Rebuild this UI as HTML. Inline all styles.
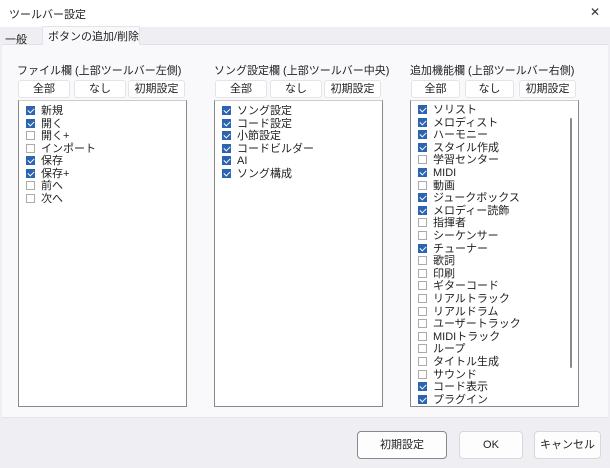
<!DOCTYPE html>
<html><head><meta charset="utf-8"><style>
*{margin:0;padding:0;box-sizing:border-box}
body{width:610px;height:468px;background:#efeef2;font-family:"Liberation Sans","Noto Sans CJK JP",sans-serif;font-size:11px;color:#222;position:relative;overflow:hidden}
.title{position:absolute;left:0;top:0;width:610px;height:27px;background:#fff;}
.ttl{position:absolute;left:9px;top:6px;font-size:11px}
.xx{position:absolute;left:590px;top:5px;font-size:12px;color:#333}
.panel{position:absolute;left:2px;top:44px;width:606px;height:374px;background:#f9f8fb;border-top:1px solid #e2e2e6;border-bottom:1px solid #e6e6ea}
.tab{position:absolute;top:28px;font-size:11px}
.lbl{position:absolute;top:62px;font-size:11px}
.btn{position:absolute;top:80px;height:18px;background:#fff;border:1px solid #e4e4e8;border-radius:3px;text-align:center;line-height:16px;font-size:11px}
.list{position:absolute;top:100px;height:307px;width:169px;background:#fff;border:1px solid #888;border-top-color:#ccc}
.it{position:absolute;left:7px;height:12px;line-height:12px;white-space:nowrap;font-size:11px}
.cb{display:inline-block;width:9px;height:9px;border:1px solid #aaa;vertical-align:-1px;margin-right:6px;background:#fff}
.on{background:#2b64b0;border-color:#2b64b0;position:relative}
.on:after{content:"";position:absolute;left:2px;top:0px;width:3px;height:5px;border:solid #fff;border-width:0 1px 1px 0;transform:rotate(45deg)}
.bb{position:absolute;top:431px;height:28px;background:#fdfdfd;border:1px solid #d8d8dc;border-radius:4px;text-align:center;line-height:26px;font-size:11px}
.sb{position:absolute;left:570px;top:118px;width:2px;height:250px;background:#8a8a8a;border-radius:1px}
</style></head><body>
<div class="title"></div>
<div class="ttl">ツールバー設定</div>
<div class="xx">✕</div>
<div class="panel"></div>
<div class="tab" style="left:5px;top:31px">一般</div>
<div style="position:absolute;left:42px;top:26px;width:98px;height:19px;background:#f9f8fb;border:1px solid #e4e4e8;border-bottom:none"></div>
<div class="tab" style="left:48px;top:28px">ボタンの追加/削除</div>

<div class="lbl" style="left:17px">ファイル欄 (上部ツールバー左側)</div>
<div class="btn" style="left:18px;width:52px">全部</div>
<div class="btn" style="left:74px;width:52px">なし</div>
<div class="btn" style="left:128px;width:57px">初期設定</div>
<div class="list" style="left:18px">
<div class="it" style="top:4px"><span class="cb on"></span>新規</div>
<div class="it" style="top:16.5px"><span class="cb on"></span>開く</div>
<div class="it" style="top:29px"><span class="cb"></span>開く+</div>
<div class="it" style="top:41.5px"><span class="cb"></span>インポート</div>
<div class="it" style="top:54px"><span class="cb on"></span>保存</div>
<div class="it" style="top:66.5px"><span class="cb on"></span>保存+</div>
<div class="it" style="top:79px"><span class="cb"></span>前へ</div>
<div class="it" style="top:91.5px"><span class="cb"></span>次へ</div>
</div>

<div class="lbl" style="left:214px">ソング設定欄 (上部ツールバー中央)</div>
<div class="btn" style="left:215px;width:52px">全部</div>
<div class="btn" style="left:270px;width:52px">なし</div>
<div class="btn" style="left:324px;width:57px">初期設定</div>
<div class="list" style="left:214px">
<div class="it" style="top:4px"><span class="cb on"></span>ソング設定</div>
<div class="it" style="top:16.5px"><span class="cb on"></span>コード設定</div>
<div class="it" style="top:29px"><span class="cb on"></span>小節設定</div>
<div class="it" style="top:41.5px"><span class="cb on"></span>コードビルダー</div>
<div class="it" style="top:54px"><span class="cb on"></span>AI</div>
<div class="it" style="top:66.5px"><span class="cb on"></span>ソング構成</div>
</div>

<div class="lbl" style="left:410px">追加機能欄 (上部ツールバー右側)</div>
<div class="btn" style="left:411px;width:49px">全部</div>
<div class="btn" style="left:465px;width:49px">なし</div>
<div class="btn" style="left:519px;width:57px">初期設定</div>
<div class="list" style="left:410px">
<div class="it" style="top:3px"><span class="cb on"></span>ソリスト</div>
<div class="it" style="top:15.6px"><span class="cb on"></span>メロディスト</div>
<div class="it" style="top:28.2px"><span class="cb on"></span>ハーモニー</div>
<div class="it" style="top:40.8px"><span class="cb on"></span>スタイル作成</div>
<div class="it" style="top:53.4px"><span class="cb"></span>学習センター</div>
<div class="it" style="top:66px"><span class="cb on"></span>MIDI</div>
<div class="it" style="top:78.6px"><span class="cb"></span>動画</div>
<div class="it" style="top:91.2px"><span class="cb on"></span>ジュークボックス</div>
<div class="it" style="top:103.8px"><span class="cb on"></span>メロディー読飾</div>
<div class="it" style="top:116.4px"><span class="cb"></span>指揮者</div>
<div class="it" style="top:129px"><span class="cb"></span>シーケンサー</div>
<div class="it" style="top:141.6px"><span class="cb on"></span>チューナー</div>
<div class="it" style="top:154.2px"><span class="cb"></span>歌詞</div>
<div class="it" style="top:166.8px"><span class="cb"></span>印刷</div>
<div class="it" style="top:179.4px"><span class="cb"></span>ギターコード</div>
<div class="it" style="top:192px"><span class="cb"></span>リアルトラック</div>
<div class="it" style="top:204.6px"><span class="cb"></span>リアルドラム</div>
<div class="it" style="top:217.2px"><span class="cb"></span>ユーザートラック</div>
<div class="it" style="top:229.8px"><span class="cb"></span>MIDIトラック</div>
<div class="it" style="top:242.4px"><span class="cb"></span>ループ</div>
<div class="it" style="top:255px"><span class="cb"></span>タイトル生成</div>
<div class="it" style="top:267.6px"><span class="cb"></span>サウンド</div>
<div class="it" style="top:280.2px"><span class="cb on"></span>コード表示</div>
<div class="it" style="top:292.8px"><span class="cb on"></span>プラグイン</div>
</div>
<div class="sb"></div>

<div class="bb" style="left:357px;width:90px;border-color:#888">初期設定</div>
<div class="bb" style="left:459px;width:64px">OK</div>
<div class="bb" style="left:534px;width:67px">キャンセル</div>
</body></html>
